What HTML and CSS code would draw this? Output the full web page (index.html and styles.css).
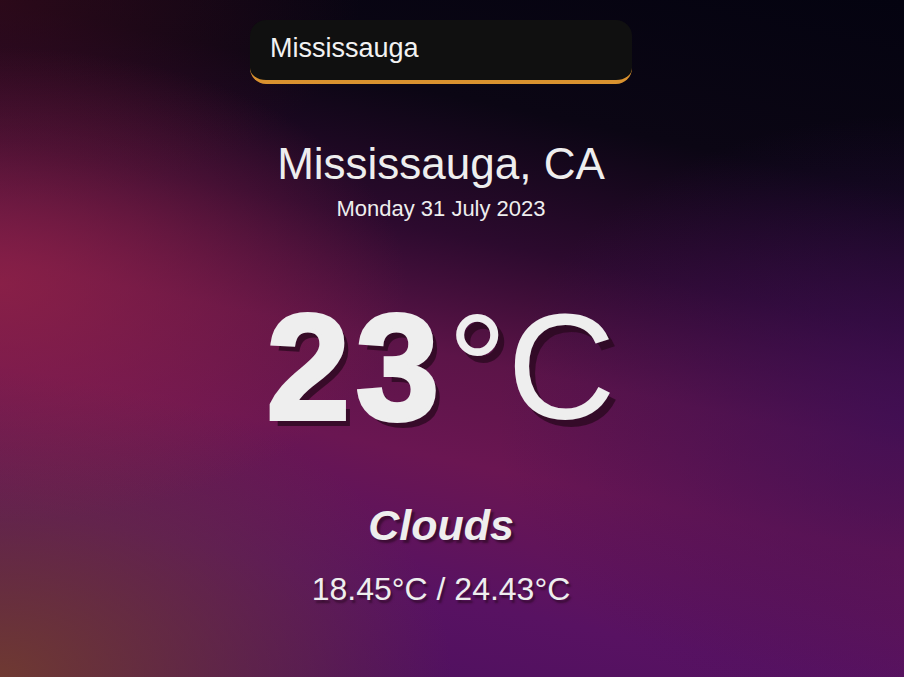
FILE: index.html
```html
<!DOCTYPE html>
<html lang="en">
<head>
<meta charset="utf-8">
<title>Weather</title>
<link rel="stylesheet" href="styles.css">
</head>
<body>
  <main class="app">
    <div class="search-box">
      <input class="search-bar" type="text" value="Mississauga" aria-label="Search city">
    </div>
    <section class="location">
      <div class="city">Mississauga, CA</div>
      <div class="date">Monday 31 July 2023</div>
    </section>
    <section class="current">
      <div class="temp"><span class="temp-num">23</span><span class="temp-unit">°C</span></div>
      <div class="weather">Clouds</div>
      <div class="hi-low">18.45°C / 24.43°C</div>
    </section>
  </main>
</body>
</html>
```
FILE: styles.css
```css
html, body {
  margin: 0;
  padding: 0;
  height: 100%;
}

body {
  font-family: "Liberation Sans", Arial, sans-serif;
  color: #eeeeee;
  overflow: hidden;
  background:
    radial-gradient(ellipse 45% 35% at 0% 42%, rgba(150, 35, 70, 0.75), rgba(150, 35, 70, 0) 100%),
    radial-gradient(ellipse 50% 45% at 0% 100%, rgba(115, 62, 45, 0.9), rgba(115, 62, 45, 0) 100%),
    radial-gradient(ellipse 40% 30% at 0% 0%, rgba(70, 12, 30, 0.55), rgba(70, 12, 30, 0) 100%),
    radial-gradient(ellipse 45% 45% at 100% 62%, rgba(60, 14, 90, 0.7), rgba(60, 14, 90, 0) 100%),
    linear-gradient(192deg, #040310 0%, #0b0614 22%, #2c0a2e 38%, #5c1448 52%, #6a1652 64%, #581262 80%, #4a0f5e 100%);
}

.app {
  box-sizing: border-box;
  min-height: 677px;
  padding-right: 22px;
  display: flex;
  flex-direction: column;
  align-items: center;
}

.search-box {
  margin-top: 20px;
  width: 382px;
}

.search-bar {
  display: block;
  box-sizing: border-box;
  width: 100%;
  height: 64px;
  padding: 0 20px 4px;
  border: none;
  border-bottom: 4px solid #d9922f;
  border-radius: 16px;
  background: #101010;
  color: #f2f2f2;
  font-family: "Liberation Sans", Arial, sans-serif;
  font-size: 27px;
  outline: none;
}

.location {
  margin-top: 58px;
  display: flex;
  flex-direction: column;
  align-items: center;
}

.city {
  font-size: 44px;
  line-height: 44px;
}

.date {
  margin-top: 12px;
  font-size: 22px;
  line-height: 22px;
}

.current {
  display: flex;
  flex-direction: column;
  align-items: center;
}

.temp {
  margin-top: 72px;
  font-size: 150px;
  line-height: 150px;
  text-shadow: 6px 7px 0 rgba(40, 8, 30, 0.75);
}

.temp-num {
  font-weight: 900;
  letter-spacing: 6px;
  margin-right: 2px;
  -webkit-text-stroke: 4px #eeeeee;
}

.temp-unit {
  font-weight: 400;
}

.weather {
  margin-top: 62px;
  font-size: 43px;
  line-height: 43px;
  font-weight: 700;
  font-style: italic;
  text-shadow: 3px 3px 2px rgba(40, 8, 30, 0.6);
}

.hi-low {
  margin-top: 26px;
  font-size: 32px;
  line-height: 32px;
  text-shadow: 2px 3px 2px rgba(40, 8, 30, 0.6);
}
```
